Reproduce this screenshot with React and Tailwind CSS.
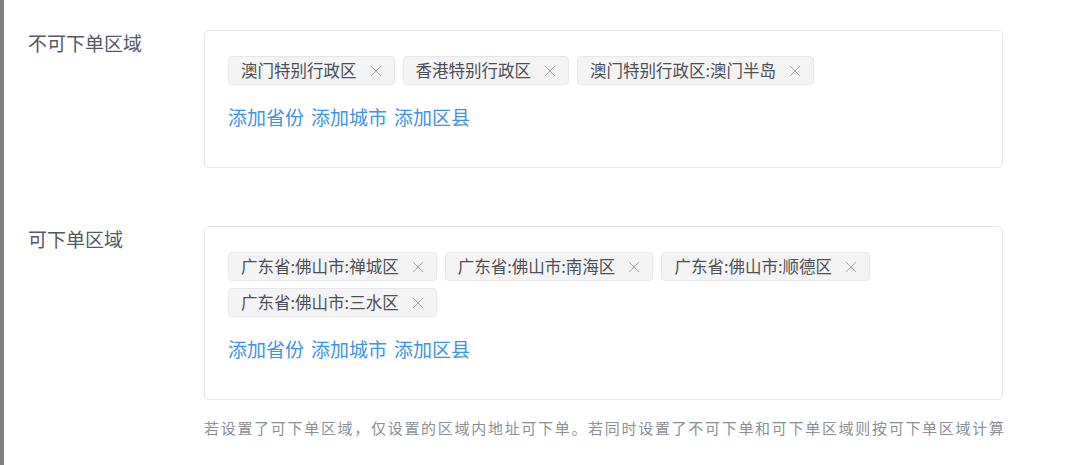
import React from 'react';

const font = { fontFamily: '"Noto Sans CJK SC", "Noto Sans", sans-serif' };

function CloseIcon() {
  return (
    <svg width="12" height="12" viewBox="0 0 12 12" className="ml-[13px] shrink-0">
      <path d="M1 1 L11 11 M11 1 L1 11" stroke="#a3a5ab" strokeWidth="1" fill="none" />
    </svg>
  );
}

function Tag({ label }) {
  return (
    <div className="flex items-center h-[29px] pl-[12px] pr-[12px] bg-[#f4f4f5] border border-[#e6e7ea] rounded-[4px] text-[16.5px] text-[#4d4f55]">
      <span className="leading-none">{label}</span>
      <CloseIcon />
    </div>
  );
}

function RegionBox({ tags }) {
  return (
    <div className="w-[799px] border border-[#e4e6ea] rounded-[5px] pt-[25px] pb-9 px-[23px] bg-white">
      <div className="flex flex-wrap gap-x-2 gap-y-[7px]">
        {tags.map((t) => (
          <Tag key={t} label={t} />
        ))}
      </div>
      <div className="mt-[18px] leading-[28px] text-[19px] text-[#3d92e8] flex gap-[7px]">
        <a href="#province">添加省份</a>
        <a href="#city">添加城市</a>
        <a href="#district">添加区县</a>
      </div>
    </div>
  );
}

function FormRow({ label, tags, children }) {
  return (
    <div className="flex">
      <div className="w-[200px] shrink-0 pl-[24px] text-[19px] leading-[26px] text-[#55585f]">{label}</div>
      <div>
        <RegionBox tags={tags} />
        {children}
      </div>
    </div>
  );
}

export default function App() {
  return (
    <div style={font} className="w-[1080px] h-[465px] bg-white border-l-4 border-[#7f7f7f] pt-[30px] overflow-hidden">
      <FormRow label="不可下单区域" tags={['澳门特别行政区', '香港特别行政区', '澳门特别行政区:澳门半岛']} />
      <div className="mt-[58px]">
        <FormRow
          label="可下单区域"
          tags={['广东省:佛山市:禅城区', '广东省:佛山市:南海区', '广东省:佛山市:顺德区', '广东省:佛山市:三水区']}
        >
          <p className="mt-[17px] text-[15px] leading-[22px] tracking-[1.7px] text-[#8c8f96] whitespace-nowrap">
            若设置了可下单区域，仅设置的区域内地址可下单。若同时设置了不可下单和可下单区域则按可下单区域计算
          </p>
        </FormRow>
      </div>
    </div>
  );
}
